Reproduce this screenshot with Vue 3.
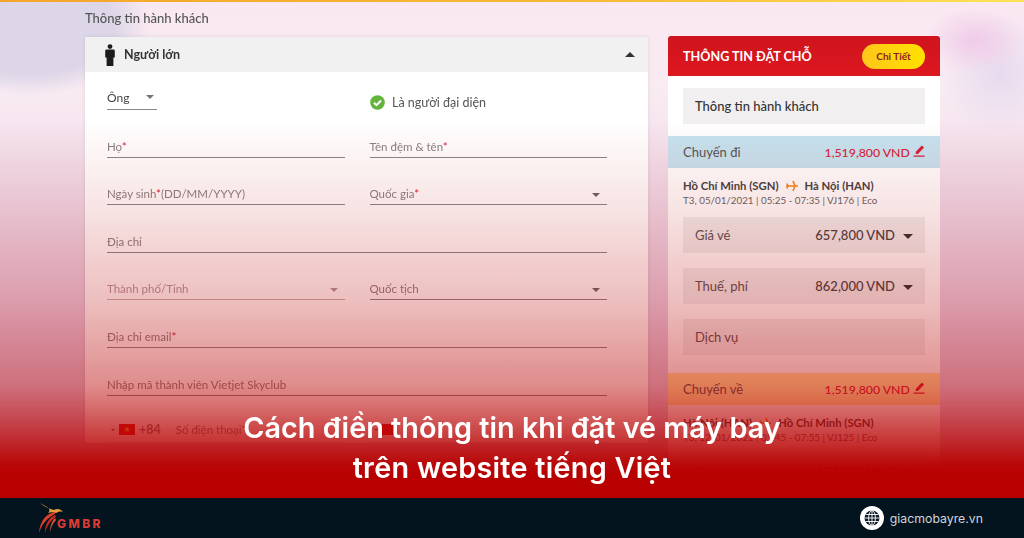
<script setup>
const details = [
  { label: 'Giá vé', value: '657,800 VND', caret: true },
  { label: 'Thuế, phí', value: '862,000 VND', caret: true },
  { label: 'Dịch vụ', value: '', caret: false }
]
</script>

<template>
  <div class="page">
    <section class="stage">
      <div class="topline"></div>
      <div class="content">
        <main class="left">
          <h2 class="left-title">Thông tin hành khách</h2>
          <div class="card">
            <div class="card-head">
              <svg class="person" width="10" height="22" viewBox="0 0 10 22">
                <circle cx="5" cy="2.600" r="2.400" fill="#1c1c1c" />
                <path d="M1.500 5.600h7q1.300 0 1.300 1.300v6.600H8.400V22H1.600v-8.500H.2V6.900q0-1.300 1.300-1.300z" fill="#1c1c1c" />
              </svg>
              <span class="head-text">Người lớn</span>
              <span class="up"></span>
            </div>
            <div class="form">
              <div class="row top-row">
                <div class="salute"><span>Ông</span><i class="caret"></i></div>
                <div class="rep">
                  <svg width="15" height="15" viewBox="0 0 15 15">
                    <circle cx="7.500" cy="7.500" r="7.300" fill="#62b53a" />
                    <path d="M3.900 7.700l2.600 2.500 4.600-4.700" fill="none" stroke="#fff" stroke-width="2" />
                  </svg>
                  <span>Là người đại diện</span>
                </div>
              </div>
              <div class="row">
                <div class="field"><span>Họ<b>*</b></span></div>
                <div class="field"><span>Tên đệm &amp; tên<b>*</b></span></div>
              </div>
              <div class="row">
                <div class="field"><span>Ngày sinh<b>*</b>(DD/MM/YYYY)</span></div>
                <div class="field"><span>Quốc gia<b>*</b></span><i class="caret"></i></div>
              </div>
              <div class="row">
                <div class="field wide"><span>Địa chỉ</span></div>
              </div>
              <div class="row">
                <div class="field muted"><span>Thành phố/Tỉnh</span><i class="caret"></i></div>
                <div class="field"><span>Quốc tịch</span><i class="caret"></i></div>
              </div>
              <div class="row">
                <div class="field wide"><span>Địa chỉ email<b>*</b></span></div>
              </div>
              <div class="row">
                <div class="field wide"><span>Nhập mã thành viên Vietjet Skyclub</span></div>
              </div>
              <div class="row">
                <div class="field phone">
                  <i class="caret tiny"></i>
                  <svg width="16" height="11" viewBox="0 0 16 11">
                    <rect width="16" height="11" fill="#d8201f" />
                    <path d="M8 2.300l.8 2.200h2.300l-1.900 1.400.7 2.300L8 6.800 6.100 8.200l.7-2.300-1.900-1.400h2.300z" fill="#f4c51e" />
                  </svg>
                  <em>+84</em>
                  <span>Số điện thoại<b>*</b></span>
                </div>
                <div class="field phone">
                  <i class="caret tiny"></i>
                  <svg width="16" height="11" viewBox="0 0 16 11">
                    <rect width="16" height="11" fill="#d8201f" />
                  </svg>
                </div>
              </div>
            </div>
          </div>
        </main>

        <aside class="right">
          <div class="side-head">
            <span class="side-title">THÔNG TIN ĐẶT CHỖ</span>
            <span class="detail-btn">Chi Tiết</span>
          </div>
          <div class="side-body">
            <div class="pax-box">Thông tin hành khách</div>
            <div class="leg blue">
              <span>Chuyến đi</span>
              <span class="price">1,519,800 VND
                <svg width="12" height="12" viewBox="0 0 12 12"><path d="M8.800.6l2.300 2L5 9H2.800V6.800zM.6 10.600h11v1.200H.6z" fill="#d5233a" /></svg>
              </span>
            </div>
            <div class="route">
              <div class="route-line">
                Hồ Chí Minh (SGN)
                <svg width="12" height="12" viewBox="0 0 12 12"><path d="M0 6h12M7 1l2 5-2 5M1 3.500l1 2.500-1 2.500" fill="none" stroke="#f28a1e" stroke-width="1.600" /></svg>
                Hà Nội (HAN)
              </div>
              <div class="route-sub">T3, 05/01/2021 | 05:25 - 07:35 | VJ176 | Eco</div>
            </div>
            <div class="detail-list">
              <div class="detail" v-for="item in details" :key="item.label">
                <span>{{ item.label }}</span>
                <span class="detail-val">{{ item.value }}<i v-if="item.caret" class="caret big"></i></span>
              </div>
            </div>
            <div class="leg orange">
              <span>Chuyến về</span>
              <span class="price">1,519,800 VND
                <svg width="12" height="12" viewBox="0 0 12 12"><path d="M8.800.6l2.300 2L5 9H2.800V6.800zM.6 10.600h11v1.200H.6z" fill="#d5233a" /></svg>
              </span>
            </div>
            <div class="route">
              <div class="route-line">
                Hà Nội (HAN)
                <svg width="12" height="12" viewBox="0 0 12 12"><path d="M0 6h12M7 1l2 5-2 5M1 3.500l1 2.500-1 2.500" fill="none" stroke="#f28a1e" stroke-width="1.600" /></svg>
                Hồ Chí Minh (SGN)
              </div>
              <div class="route-sub">T3, 12/01/2021 | 05:45 - 07:55 | VJ125 | Eco</div>
            </div>
            <div class="detail-list">
              <div class="detail">
                <span>Giá vé</span>
                <span class="detail-val">657,800 VND<i class="caret big"></i></span>
              </div>
            </div>
          </div>
        </aside>
      </div>

      <div class="shade"></div>
      <h1 class="caption">Cách điền thông tin khi đặt vé máy bay<br /><span class="second">trên website tiếng Việt</span></h1>
    </section>

    <footer class="footer">
      <div class="logo">
        <svg width="28" height="32" viewBox="0 0 28 32">
          <path d="M2 1c5 4 10 6 14 7 3-2 7-1 9 2-3-1-5 0-7 1-3-1-6-1-8 0 3-3 2-5-8-10z" fill="#e8a03a" />
          <path d="M17 10C9 11 2 18 1 31c3-9 8-15 16-19z" fill="#d8402c" />
          <path d="M17 13C12 15 7 21 7 31c2-7 5-12 11-16z" fill="#c52a22" />
          <path d="M17 16c-3 3-5 8-5 14 1-5 3-9 6-12z" fill="#e2552c" />
        </svg>
        <span class="logo-text">GMBR</span>
      </div>
      <div class="site">
        <svg width="24" height="24" viewBox="0 0 24 24">
          <circle cx="12" cy="12" r="12" fill="#fff" />
          <circle cx="12" cy="12" r="7.500" fill="#0b1a26" />
          <g fill="none" stroke="#fff" stroke-width=".9">
            <ellipse cx="12" cy="12" rx="3.400" ry="7.500" />
            <path d="M12 4.500v15M4.500 12h15M5.500 8.500h13M5.500 15.500h13" />
          </g>
        </svg>
        <span>giacmobayre.vn</span>
      </div>
    </footer>
  </div>
</template>

<style scoped>
.page {
  width: 1024px;
  height: 538px;
  display: flex;
  flex-direction: column;
  overflow: hidden;
  font-family: Lato, 'Noto Sans', sans-serif;
}

.stage {
  flex: 1;
  position: relative;
  overflow: hidden;
  background:
    radial-gradient(ellipse 120px 72px at 30px 24px, #dcd6e8 70%, transparent),
    radial-gradient(ellipse 50px 34px at 975px 40px, #f0cbe8, transparent),
    radial-gradient(ellipse 60px 60px at 1000px 75px, #e6daee, transparent),
    linear-gradient(180deg, #f9e8f1 0, #f9ebf2 90px, #efdbea 200px, #e6d0e6 320px, #d6c8e0 100%);
}

.topline {
  height: 2px;
  background: linear-gradient(90deg, #f4a62a, #f7bb35 60%, #fde258);
}

.content {
  display: flex;
  gap: 20px;
  padding: 8px 84px 0 85px;
  filter: blur(0.6px);
}

.left {
  width: 563px;
}

.left-title {
  margin: 0 0 10px;
  height: 17px;
  font-size: 13px;
  line-height: 17px;
  font-weight: 500;
  color: #555;
}

.card {
  background: #fff;
  border-radius: 3px;
  box-shadow: 0 0 4px rgba(0, 0, 0, 0.1);
}

.card-head {
  height: 35px;
  display: flex;
  align-items: center;
  gap: 9px;
  padding: 0 13px 0 20px;
  background: #f1f1f1;
}

.head-text {
  flex: 1;
  font-size: 12.500px;
  font-weight: 700;
  color: #333;
}

.up {
  border: 5px solid transparent;
  border-top: 0;
  border-bottom: 5px solid #333;
}

.form {
  padding: 0 41px 0 22px;
}

.row {
  display: flex;
  gap: 25px;
  height: 47.600px;
}

.top-row {
  height: 38px;
  align-items: flex-end;
}

.salute {
  width: 50px;
  margin-right: 188px;
  display: flex;
  align-items: center;
  justify-content: space-between;
  height: 24px;
  border-bottom: 1px solid #8b8688;
  font-size: 12px;
  color: #444;
}

.salute .caret {
  margin: 0 3px 0 0;
  border-top-color: #777;
}

.rep {
  display: flex;
  align-items: center;
  gap: 7px;
  font-size: 12.500px;
  color: #555;
  height: 16px;
}

.field {
  flex: 1;
  display: flex;
  align-items: flex-end;
  justify-content: space-between;
  padding-bottom: 3px;
  border-bottom: 1px solid #8b8688;
  font-size: 11.500px;
  line-height: 14px;
  color: #8a8284;
}

.field b {
  color: #e0203c;
  font-weight: 400;
}

.muted {
  color: #b09a9c;
  border-bottom-color: #c4b0b0;
}

.muted .caret {
  border-top-color: #b09a9c;
}

.phone {
  justify-content: flex-start;
  align-items: flex-end;
  gap: 4px;
  padding-bottom: 5px;
  border-color: rgba(139, 134, 136, 0.25);
}

.phone em {
  font-style: normal;
  font-weight: 700;
  font-size: 12.500px;
  margin-right: 11px;
}

.phone .tiny {
  margin: 0 0 6px 4px;
}

.phone svg {
  margin-bottom: 2px;
}

.caret {
  display: inline-block;
  margin: 0 7px 4px 0;
  border: 4px solid transparent;
  border-bottom: 0;
  border-top: 4px solid #666;
}

.tiny {
  border-width: 2px;
  border-bottom: 0;
}

.big {
  border-width: 5px;
  border-bottom: 0;
  margin: 0 0 0 8px;
  vertical-align: middle;
  border-top-color: #333;
}

.right {
  width: 272px;
  margin-top: 26px;
}

.side-head {
  height: 40px;
  display: flex;
  align-items: center;
  justify-content: space-between;
  padding: 0 15px;
  background: linear-gradient(180deg, #cf141d, #dd1720);
  border-radius: 3px 3px 0 0;
}

.side-title {
  color: #fff;
  font-size: 12.600px;
  font-weight: 700;
}

.detail-btn {
  width: 63px;
  height: 25px;
  line-height: 24px;
  text-align: center;
  border-radius: 13px;
  background: linear-gradient(90deg, #ffc61a, #ffe100);
  color: #8a2020;
  font-size: 10px;
  font-weight: 700;
}

.side-body {
  background: #fff;
  padding-top: 12px;
  height: 430px;
}

.pax-box {
  margin: 0 15px;
  height: 36px;
  line-height: 36px;
  padding-left: 12px;
  background: #f1efef;
  font-size: 13px;
  font-weight: 500;
  color: #333;
}

.leg {
  margin-top: 12px;
  height: 32px;
  display: flex;
  align-items: center;
  justify-content: space-between;
  padding: 0 15px;
  font-size: 13px;
  color: #555;
}

.blue {
  background: #c6e3f0;
}

.orange {
  background: #ffe6a0;
  margin-top: 18px;
}

.price {
  color: #d5233a;
  font-size: 12.300px;
  font-weight: 500;
}

.route {
  padding: 11px 15px 0;
}

.route-line {
  display: flex;
  align-items: center;
  gap: 7px;
  font-size: 11.300px;
  line-height: 14px;
  font-weight: 700;
  color: #444;
}

.route-sub {
  margin-top: 1px;
  font-size: 9.800px;
  line-height: 13px;
  color: #666;
}

.detail-list {
  margin: 10px 15px 0;
  display: flex;
  flex-direction: column;
  gap: 15px;
}

.detail {
  height: 36px;
  display: flex;
  align-items: center;
  justify-content: space-between;
  padding: 0 12px;
  background: #f1efef;
  font-size: 13px;
  color: #555;
}

.detail-val {
  font-weight: 500;
  color: #444;
}

.shade {
  position: absolute;
  inset: 0;
  background: linear-gradient(180deg, rgba(184, 0, 0, 0) 120px, rgba(184, 0, 0, 0.1) 205px, rgba(184, 0, 0, 0.25) 300px, rgba(184, 0, 0, 0.45) 385px, rgba(184, 0, 0, 0.56) 405px, rgba(184, 0, 0, 0.79) 440px, rgba(184, 0, 0, 0.97) 465px, #b80000 475px);
}

.caption {
  position: absolute;
  left: 0;
  right: 0;
  top: 408px;
  margin: 0;
  text-align: center;
  color: #fff;
  font-family: Inter, sans-serif;
  font-size: 28.800px;
  line-height: 40px;
  font-weight: 600;
}

.second {
  letter-spacing: 0.27px;
}

.footer {
  height: 40px;
  flex: none;
  display: flex;
  align-items: center;
  justify-content: space-between;
  padding: 0 41px 0 38px;
  background: #04141f;
}

.logo {
  display: flex;
  align-items: center;
}

.logo-text {
  margin: 10px 0 0 -9px;
  font-family: Inter, sans-serif;
  font-size: 12px;
  font-weight: 800;
  letter-spacing: 2.400px;
  color: #d93a35;
}

.site {
  display: flex;
  align-items: center;
  gap: 6px;
  font-family: Inter, sans-serif;
  font-size: 12.300px;
  color: #cfd6db;
}
</style>
